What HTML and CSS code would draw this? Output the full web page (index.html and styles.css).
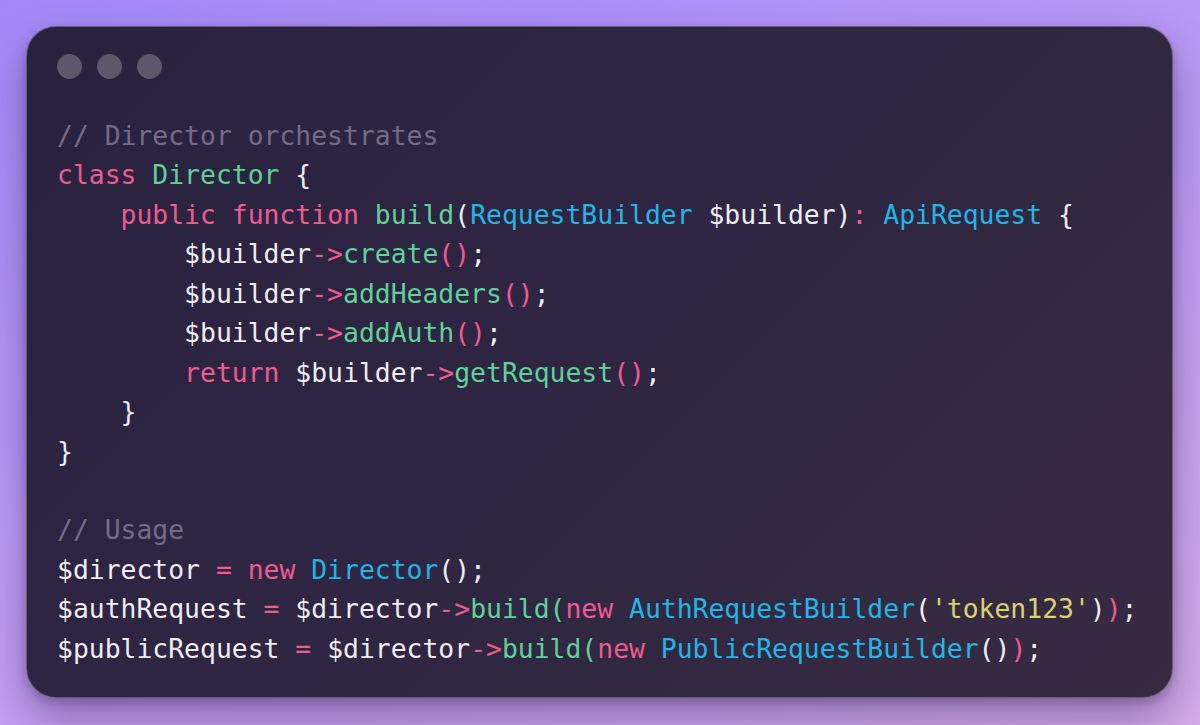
FILE: index.html
```html
<!DOCTYPE html>
<html lang="en">
<head>
<meta charset="utf-8">
<title>Builder Director</title>
<link rel="stylesheet" href="styles.css">
</head>
<body>
<main class="stage">
  <section class="window">
    <div class="dots">
      <span class="dot"></span>
      <span class="dot"></span>
      <span class="dot"></span>
    </div>
    <div class="code">
      <div class="line"><span class="cm">// Director orchestrates</span></div>
      <div class="line"><span class="kw">class</span> <span class="fn">Director</span> <span class="tx">{</span></div>
      <div class="line">    <span class="kw">public</span> <span class="kw">function</span> <span class="fn">build</span><span class="tx">(</span><span class="ty">RequestBuilder</span> <span class="tx">$builder)</span><span class="kw">:</span> <span class="ty">ApiRequest</span> <span class="tx">{</span></div>
      <div class="line">        <span class="tx">$builder</span><span class="kw">-&gt;</span><span class="fn">create</span><span class="kw">()</span><span class="tx">;</span></div>
      <div class="line">        <span class="tx">$builder</span><span class="kw">-&gt;</span><span class="fn">addHeaders</span><span class="kw">()</span><span class="tx">;</span></div>
      <div class="line">        <span class="tx">$builder</span><span class="kw">-&gt;</span><span class="fn">addAuth</span><span class="kw">()</span><span class="tx">;</span></div>
      <div class="line">        <span class="kw">return</span> <span class="tx">$builder</span><span class="kw">-&gt;</span><span class="fn">getRequest</span><span class="kw">()</span><span class="tx">;</span></div>
      <div class="line">    <span class="tx">}</span></div>
      <div class="line"><span class="tx">}</span></div>
      <div class="line"> </div>
      <div class="line"><span class="cm">// Usage</span></div>
      <div class="line"><span class="tx">$director</span> <span class="kw">=</span> <span class="kw">new</span> <span class="ty">Director</span><span class="tx">();</span></div>
      <div class="line"><span class="tx">$authRequest</span> <span class="kw">=</span> <span class="tx">$director</span><span class="kw">-&gt;</span><span class="fn">build(</span><span class="kw">new</span> <span class="ty">AuthRequestBuilder</span><span class="tx">(</span><span class="st">'token123'</span><span class="tx">)</span><span class="kw">)</span><span class="tx">;</span></div>
      <div class="line"><span class="tx">$publicRequest</span> <span class="kw">=</span> <span class="tx">$director</span><span class="kw">-&gt;</span><span class="fn">build(</span><span class="kw">new</span> <span class="ty">PublicRequestBuilder</span><span class="tx">()</span><span class="kw">)</span><span class="tx">;</span></div>
    </div>
  </section>
</main>
</body>
</html>
```
FILE: styles.css
```css
html, body {
  margin: 0;
  padding: 0;
}

body {
  width: 1200px;
  height: 725px;
  overflow: hidden;
  background: linear-gradient(160deg, #a389f8 0%, #bb9cf6 45%, #d6aeea 100%);
  font-family: "DejaVu Sans Mono", "Liberation Mono", monospace;
}

.stage {
  padding: 26px 27px 27px 26px;
  box-sizing: border-box;
  height: 725px;
}

.window {
  box-sizing: border-box;
  height: 672px;
  border-radius: 30px;
  border: 1.5px solid rgba(150, 135, 170, 0.55);
  background: linear-gradient(135deg, #29223e 0%, #2e2642 50%, #372b41 100%);
  box-shadow: 0 22px 45px rgba(55, 30, 90, 0.42), 0 4px 10px rgba(40, 20, 70, 0.25);
  padding: 27px 30px 0 30px;
}

.dots {
  display: flex;
  gap: 15px;
  height: 26px;
}

.dot {
  width: 25px;
  height: 25px;
  border-radius: 50%;
  background: #5c5769;
}

.code {
  margin-top: 36px;
  font-size: 26.4px;
  line-height: 39.45px;
  color: #eeedf2;
}

.line {
  height: 39.45px;
  white-space: pre;
}

.cm { color: #726c8a; }
.kw { color: #ee5a93; }
.fn { color: #5fd199; }
.ty { color: #22b5e6; }
.tx { color: #eeedf2; }
.st { color: #d8d271; }
```
